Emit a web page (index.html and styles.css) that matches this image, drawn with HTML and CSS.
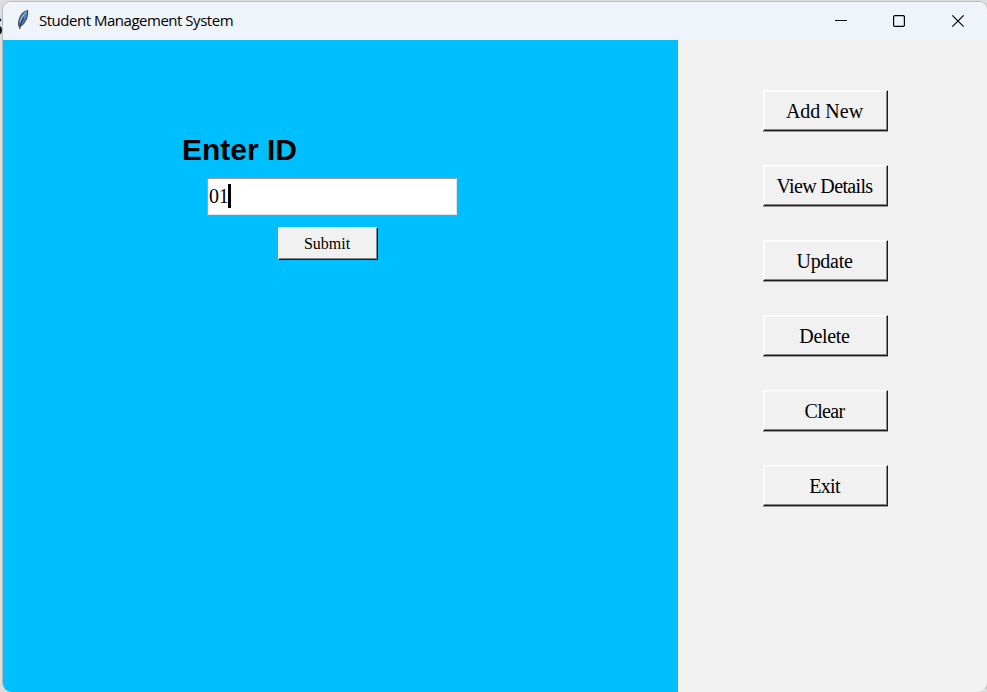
FILE: index.html
```html
<!DOCTYPE html>
<html lang="en">
<head>
<meta charset="utf-8">
<title>Student Management System</title>
<link rel="stylesheet" href="styles.css">
</head>
<body>
<span class="behind">S</span>
<div class="window">
  <header class="titlebar">
    <svg class="feather" width="14" height="22" viewBox="0 0 14 22">
      <path d="M11.500 1.500C8 2.500 5 5.500 3.800 9C2.500 12.500 2 15 3.200 17.500C7 16 9 13 9.300 11L10.300 10.500C11.500 7 12 4 11.500 1.500Z" fill="#4a8ad4" stroke="#46505c" stroke-width="1.300"/>
      <path d="M10.500 3C7.500 5 5 9 4 13" fill="none" stroke="#b4c4d4" stroke-width="1"/>
      <path d="M8 8.500C6.500 10.500 4.500 14 3.700 20" fill="none" stroke="#26313d" stroke-width="1.100"/>
    </svg>
    <h1 class="title">Student Management System</h1>
    <svg class="controls" width="130" height="14" viewBox="0 0 130 14" fill="none" stroke="#000" stroke-width="1.200">
      <path d="M0 6.500H12"/>
      <rect x="58.600" y="1.600" width="10.800" height="10.800" rx="1.200"/>
      <path d="M117.300 1.300L128.700 12.700M128.700 1.300L117.300 12.700"/>
    </svg>
  </header>
  <main class="content">
    <section class="form">
      <label class="label" for="id">Enter ID</label>
      <div class="entry" id="id"><span class="value">01</span><span class="caret"></span></div>
      <button class="btn submit">Submit</button>
    </section>
    <nav class="menu">
      <button class="btn">Add New</button>
      <button class="btn tight">View Details</button>
      <button class="btn snug">Update</button>
      <button class="btn snug">Delete</button>
      <button class="btn tight">Clear</button>
      <button class="btn tight">Exit</button>
    </nav>
  </main>
</div>
</body>
</html>
```
FILE: styles.css
```css
* { box-sizing: border-box; }
body {
  margin: 0;
  height: 692px;
  padding: 1px 0 0 2px;
  overflow: hidden;
  background: #dedede;
}
.behind {
  position: absolute;
  left: -17px;
  top: 8px;
  font: bold 30px/36px "Liberation Sans", Arial, sans-serif;
  color: #000;
}
.window {
  position: relative;
  width: 986px;
  height: 691px;
  display: flex;
  flex-direction: column;
  border: 1px solid #b9b9b9;
  border-bottom: 0;
  border-radius: 9px;
  overflow: hidden;
  background: #f1f1f1;
}
.titlebar {
  height: 38px;
  flex: none;
  display: flex;
  align-items: center;
  padding: 0 22px 0 13px;
  background: #eff3fa;
}
.feather { flex: none; margin-bottom: 2px; }
.title {
  flex: 1;
  margin: 0 0 2px 9px;
  font: 400 15px/20px "Open Sans", sans-serif;
  letter-spacing: -0.48px;
  color: #000;
}
.controls { flex: none; }
.content { flex: 1; display: flex; }
.form {
  width: 675px;
  display: flex;
  flex-direction: column;
  align-items: flex-start;
  padding: 92px 0 0 179px;
  background: #00bfff;
}
.label {
  font: bold 30px/36px "Liberation Sans", Arial, sans-serif;
  color: #000;
}
.entry {
  width: 250px;
  height: 37px;
  margin: 10px 0 0 25px;
  display: flex;
  align-items: center;
  padding: 0 0 2px 1px;
  border: 1px solid;
  border-color: #a0a0a0 #e3e3e3 #e3e3e3 #a0a0a0;
  background: #fff;
  font: 20px/24px "Liberation Serif", "Times New Roman", serif;
  color: #000;
}
.value { letter-spacing: -0.3px; }
.caret { width: 3px; height: 24px; background: #000; }
.btn {
  width: 125px;
  height: 41px;
  padding: 1px 2px 0 0;
  border: 1px solid;
  border-color: #fff #1c1c1c #1c1c1c #fff;
  box-shadow: inset -1px -1px #888, inset 1px 1px #f8f8f8, 0 1px #999;
  background: #f1f1f1;
  font: 20px/24px "Liberation Serif", "Times New Roman", serif;
  color: #000;
  white-space: nowrap;
}
.tight { letter-spacing: -0.65px; }
.snug { letter-spacing: -0.3px; }
.submit {
  width: 100px;
  height: 33px;
  margin: 12px 0 0 96px;
  box-shadow: inset -1px -1px #888;
  font-size: 16px;
  line-height: 20px;
}
.menu {
  flex: 1;
  display: flex;
  flex-direction: column;
  gap: 34px;
  padding: 50px 0 0 85px;
}
```
